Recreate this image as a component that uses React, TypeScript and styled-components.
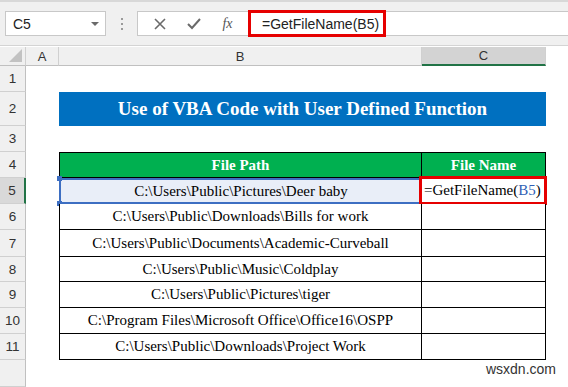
import React from "react";
import styled, { createGlobalStyle } from "styled-components";

const Global = createGlobalStyle`
  html, body { margin: 0; padding: 0; background: #fff; }
  body { width: 568px; height: 387px; overflow: hidden; font-family: "Liberation Sans", Arial, sans-serif; }
`;

const COLS = "26px 33px 363px 124px 1fr";

const Page = styled.div`
  width: 568px;
  height: 387px;
  position: relative;
  overflow: hidden;
  display: flex;
  flex-direction: column;
`;

const Toolbar = styled.div`
  height: 46px;
  flex: none;
  background: #f0f0f0;
  border-top: 2px solid #d8d8d8;
  border-bottom: 1px solid #d4d4d4;
  box-sizing: border-box;
  display: flex;
  align-items: center;
  padding-left: 5px;
`;

const NameBox = styled.div`
  width: 101px;
  height: 25px;
  box-sizing: border-box;
  background: #fff;
  border: 1px solid #c8c8c8;
  display: flex;
  align-items: center;
  justify-content: space-between;
  padding: 0 6px 0 7px;
  font-size: 14px;
  color: #222;
`;

const Caret = styled.span`
  width: 0;
  height: 0;
  border-left: 4px solid transparent;
  border-right: 4px solid transparent;
  border-top: 4px solid #6a6a6a;
`;

const Grip = styled.div`
  width: 31px;
  display: flex;
  flex-direction: column;
  align-items: center;
  gap: 3px;
  span { width: 2px; height: 2px; background: #9a9a9a; }
`;

const FxButtons = styled.div`
  width: 113px;
  height: 25px;
  box-sizing: border-box;
  background: #fff;
  border: 1px solid #c8c8c8;
  display: flex;
  align-items: center;
  justify-content: space-around;
  padding: 0 6px;
  color: #6a6a6a;
`;

const Fx = styled.span`
  font-family: "Liberation Serif", serif;
  font-style: italic;
  font-size: 14px;
  color: #555;
`;

const FormulaInput = styled.div`
  flex: 1;
  height: 25px;
  box-sizing: border-box;
  background: #fff;
  border-top: 1px solid #c8c8c8;
  border-bottom: 1px solid #c8c8c8;
  position: relative;
  display: flex;
  align-items: center;
  padding-left: 12px;
  font-size: 14px;
  color: #222;
`;

const RedBox = styled.div<{ $w: number }>`
  position: absolute;
  left: -2px;
  top: -2px;
  bottom: -2px;
  width: ${(p) => p.$w}px;
  border: 3px solid #e60000;
  box-sizing: border-box;
`;

const Sheet = styled.div`
  flex: 1;
  display: flex;
  flex-direction: column;
  margin-top: 1px;
`;

const Row = styled.div<{ $h: number }>`
  display: grid;
  grid-template-columns: ${COLS};
  height: ${(p) => p.$h}px;
  flex: none;
`;

const FillRow = styled(Row)`
  flex: 1;
`;

const ColHead = styled.div<{ $active?: boolean }>`
  background: ${(p) => (p.$active ? "#d3d3d3" : "#f0f0f0")};
  border-right: 1px solid #d0d0d0;
  border-bottom: ${(p) => (p.$active ? "2px solid #217346" : "1px solid #c0c0c0")};
  box-sizing: border-box;
  display: flex;
  align-items: center;
  justify-content: center;
  font-size: 13px;
  color: #333;
`;

const Corner = styled(ColHead)`
  position: relative;
  &::after {
    content: "";
    position: absolute;
    right: 3px;
    bottom: 3px;
    border-left: 13px solid transparent;
    border-bottom: 13px solid #c2c2c2;
  }
`;

const RowHead = styled.div<{ $active?: boolean }>`
  background: ${(p) => (p.$active ? "#d9d9d9" : "#f0f0f0")};
  border-bottom: 1px solid #d0d0d0;
  border-right: ${(p) => (p.$active ? "2px solid #217346" : "1px solid #c0c0c0")};
  box-sizing: border-box;
  display: flex;
  align-items: center;
  justify-content: center;
  font-size: 13.5px;
  color: #333;
`;

const Blank = styled.div``;

const Title = styled.div`
  grid-column: 3 / 5;
  background: #0070c0;
  color: #fff;
  font-family: "Liberation Serif", "Times New Roman", serif;
  font-weight: bold;
  font-size: 19px;
  display: flex;
  align-items: center;
  justify-content: center;
`;

const Cell = styled.div<{ $head?: boolean; $first?: boolean; $left?: boolean }>`
  box-sizing: border-box;
  background: ${(p) => (p.$head ? "#00b050" : "#fff")};
  color: ${(p) => (p.$head ? "#fff" : "#000")};
  font-family: "Liberation Serif", "Times New Roman", serif;
  font-weight: ${(p) => (p.$head ? "bold" : "normal")};
  font-size: 15px;
  border-right: 1px solid #000;
  border-bottom: 1px solid #000;
  border-top: ${(p) => (p.$head ? "1px solid #000" : "none")};
  border-left: ${(p) => (p.$first ? "1px solid #000" : "none")};
  display: flex;
  align-items: center;
  justify-content: ${(p) => (p.$left ? "flex-start" : "center")};
  padding-left: ${(p) => (p.$left ? "2px" : "0")};
  position: relative;
  white-space: nowrap;
`;

const RefCell = styled(Cell)`
  background: #e9eef8;
  border-top: 2px solid #3d6ec2;
  border-bottom: 2px solid #3d6ec2;
  border-left: 2px solid #3d6ec2;
`;

const Handle = styled.span<{ $bottom?: boolean }>`
  position: absolute;
  left: -4px;
  ${(p) => (p.$bottom ? "bottom: -4px;" : "top: -4px;")}
  width: 5px;
  height: 5px;
  background: #3d6ec2;
`;

const CellRed = styled.div`
  position: absolute;
  left: -3px;
  right: -2px;
  top: -2px;
  bottom: -2px;
  border: 3px solid #e60000;
  box-sizing: border-box;
`;

const Ref = styled.span`
  color: #2f5fb5;
`;

const Watermark = styled.div`
  position: absolute;
  right: 12px;
  bottom: 10px;
  font-family: "Liberation Sans", Arial, sans-serif;
  font-size: 14px;
  color: #333;
`;

const paths = [
  "C:\\Users\\Public\\Downloads\\Bills for work",
  "C:\\Users\\Public\\Documents\\Academic-Curveball",
  "C:\\Users\\Public\\Music\\Coldplay",
  "C:\\Users\\Public\\Pictures\\tiger",
  "C:\\Program Files\\Microsoft Office\\Office16\\OSPP",
  "C:\\Users\\Public\\Downloads\\Project Work",
];
const heights = [26, 26, 27, 25, 26, 26, 26];

export default function App() {
  return (
    <Page>
      <Global />
      <Toolbar>
        <NameBox>
          C5
          <Caret />
        </NameBox>
        <Grip>
          <span />
          <span />
          <span />
        </Grip>
        <FxButtons>
          <svg width="12" height="12" viewBox="0 0 12 12">
            <path d="M1 1 L11 11 M11 1 L1 11" stroke="#6a6a6a" strokeWidth="1.6" />
          </svg>
          <svg width="14" height="12" viewBox="0 0 14 12">
            <path d="M1 6 L5 10 L13 1" stroke="#6a6a6a" strokeWidth="2" fill="none" />
          </svg>
          <Fx>fx</Fx>
        </FxButtons>
        <FormulaInput>
          <RedBox $w={138} />
          =GetFileName(B5)
        </FormulaInput>
      </Toolbar>
      <Sheet>
        <Row $h={19}>
          <Corner />
          <ColHead>A</ColHead>
          <ColHead>B</ColHead>
          <ColHead $active>C</ColHead>
          <Blank />
        </Row>
        <Row $h={26}>
          <RowHead>1</RowHead>
        </Row>
        <Row $h={34}>
          <RowHead>2</RowHead>
          <Blank />
          <Title>Use of VBA Code with User Defined Function</Title>
        </Row>
        <Row $h={26}>
          <RowHead>3</RowHead>
        </Row>
        <Row $h={26}>
          <RowHead>4</RowHead>
          <Blank />
          <Cell $head $first>File Path</Cell>
          <Cell $head>File Name</Cell>
        </Row>
        <Row $h={26}>
          <RowHead $active>5</RowHead>
          <Blank />
          <RefCell $first>
            <Handle />
            <Handle $bottom />
            C:\Users\Public\Pictures\Deer baby
          </RefCell>
          <Cell $left>
            <CellRed />
            =GetFileName(<Ref>B5</Ref>)
          </Cell>
        </Row>
        {paths.map((p, i) => (
          <Row $h={heights[i + 1]} key={p}>
            <RowHead>{i + 6}</RowHead>
            <Blank />
            <Cell $first>{p}</Cell>
            <Cell />
          </Row>
        ))}
        <FillRow $h={0}>
          <RowHead />
        </FillRow>
      </Sheet>
      <Watermark>wsxdn.com</Watermark>
    </Page>
  );
}
